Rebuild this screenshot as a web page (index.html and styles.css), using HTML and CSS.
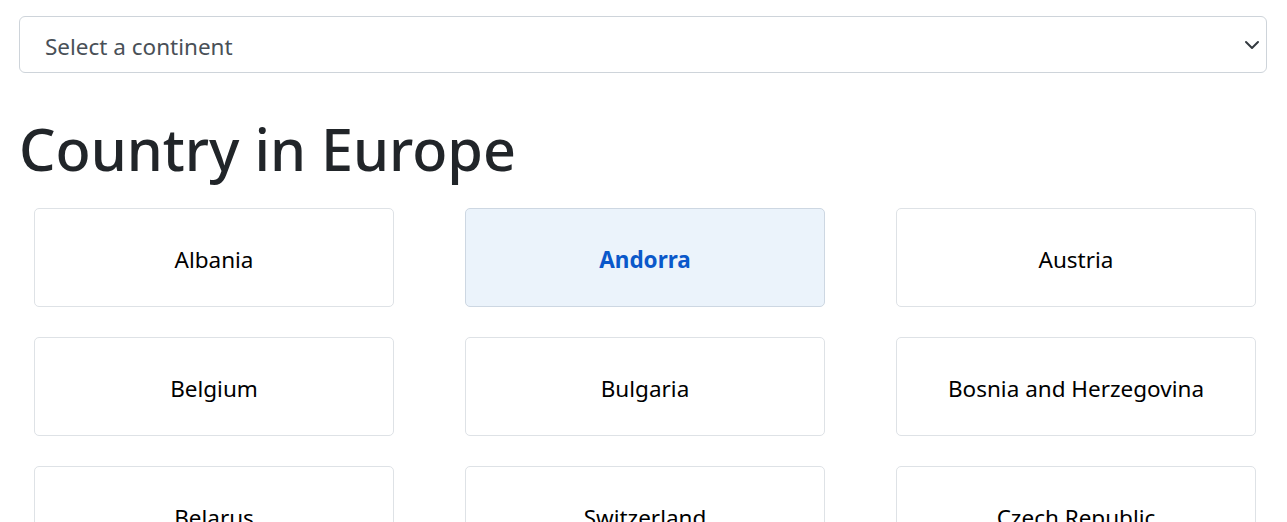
FILE: index.html
```html
<!DOCTYPE html>
<html lang="en">
<head>
<meta charset="utf-8">
<title>Countries</title>
<link rel="stylesheet" href="styles.css">
</head>
<body>
<main class="page">
  <select class="continent-select">
    <option>Select a continent</option>
    <option>Africa</option>
    <option>Asia</option>
    <option>Europe</option>
  </select>
  <h1 class="title">Country in Europe</h1>
  <div class="country-grid">
    <div class="country-card">Albania</div>
    <div class="country-card is-active">Andorra</div>
    <div class="country-card">Austria</div>
    <div class="country-card">Belgium</div>
    <div class="country-card">Bulgaria</div>
    <div class="country-card">Bosnia and Herzegovina</div>
    <div class="country-card">Belarus</div>
    <div class="country-card">Switzerland</div>
    <div class="country-card">Czech Republic</div>
  </div>
</main>
</body>
</html>
```

FILE: styles.css
```css
html, body {
  margin: 0;
  padding: 0;
  background: #fff;
}
body {
  font-family: "Noto Sans", "Open Sans", sans-serif;
  color: #212529;
}
.page {
  padding: 16px 20px 0 19px;
}
.continent-select {
  display: block;
  width: 100%;
  height: 57px;
  box-sizing: border-box;
  padding: 4px 40px 0 25px;
  font-family: inherit;
  font-size: 22.5px;
  font-weight: 400;
  color: #495057;
  background-color: #fff;
  background-image: url("data:image/svg+xml,%3csvg xmlns='http://www.w3.org/2000/svg' viewBox='0 0 16 16'%3e%3cpath fill='none' stroke='%23343a40' stroke-linecap='round' stroke-linejoin='round' stroke-width='2' d='M2 5l6 6 6-6'/%3e%3c/svg%3e");
  background-repeat: no-repeat;
  background-position: right 6px center;
  background-size: 16px 16px;
  border: 1px solid #ced4da;
  border-radius: 6px;
  appearance: none;
  -webkit-appearance: none;
  outline: none;
}
.title {
  margin: 42px 0 24px;
  font-size: 57.5px;
  font-weight: 500;
  line-height: 1.2;
  color: #212529;
}
.country-grid {
  display: grid;
  grid-template-columns: repeat(3, 360px);
  column-gap: 71px;
  row-gap: 30px;
  padding-left: 15px;
}
.country-card {
  height: 99px;
  box-sizing: border-box;
  padding-top: 4px;
  display: flex;
  align-items: center;
  justify-content: center;
  border: 1px solid #dee2e6;
  border-radius: 5px;
  font-size: 22.5px;
  color: #000;
  background: #fff;
}
.country-card.is-active {
  background: #ebf3fb;
  border-color: #cdd7e2;
  color: #0a58ca;
  font-weight: 700;
}
```
